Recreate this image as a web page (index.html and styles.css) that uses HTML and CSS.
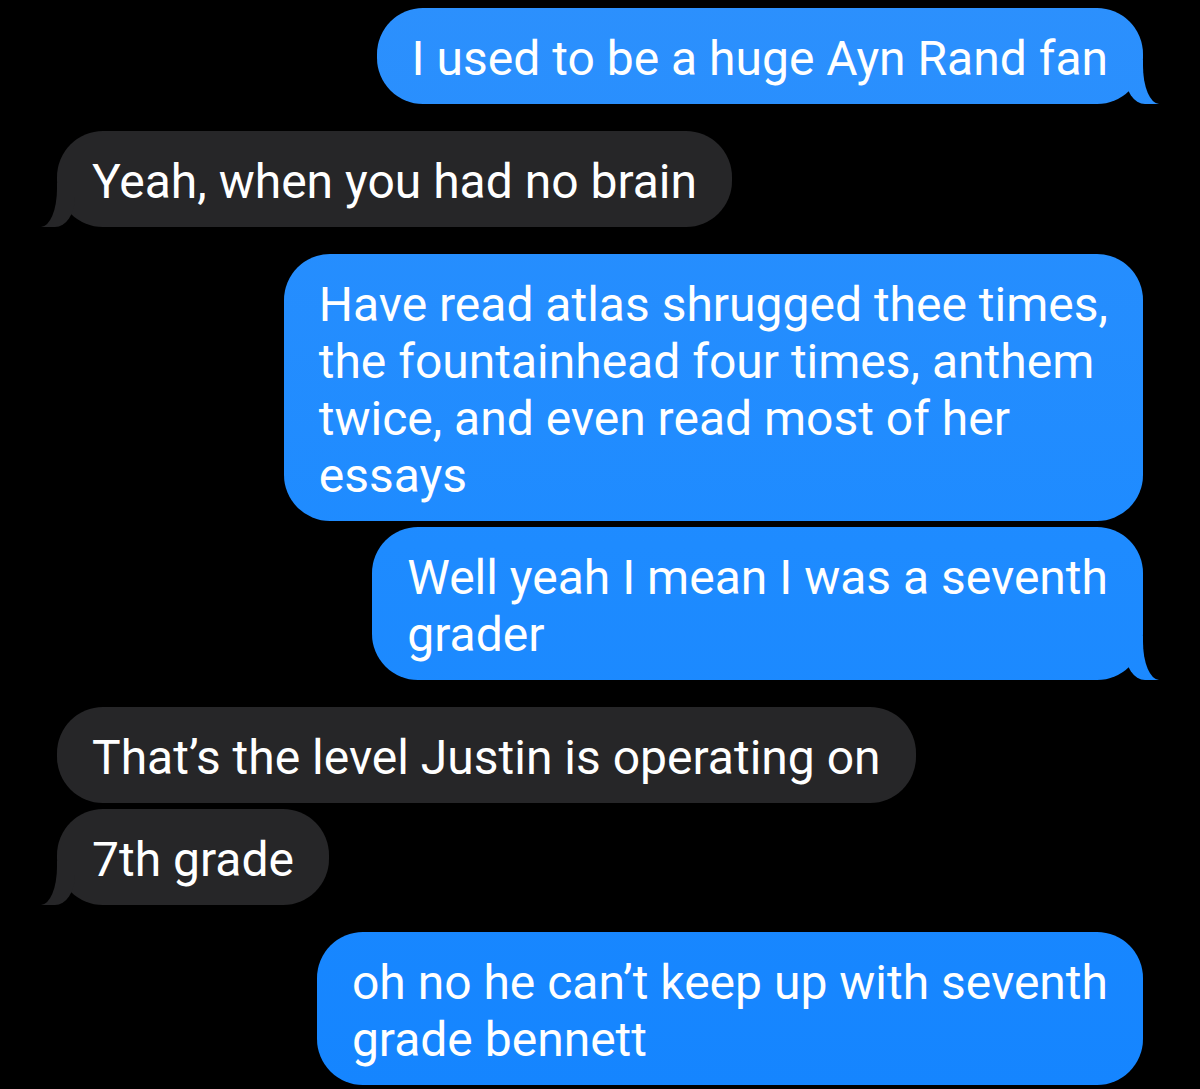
FILE: index.html
```html
<!DOCTYPE html>
<html lang="en">
<head>
<meta charset="utf-8">
<title>Messages</title>
<link rel="stylesheet" href="styles.css">
</head>
<body>
<main class="thread">
  <div class="msg sent tail">I used to be a huge Ayn Rand fan</div>
  <div class="msg received tail new">Yeah, when you had no brain</div>
  <div class="msg sent new">Have read atlas shrugged thee times,<br>the fountainhead four times, anthem<br>twice, and even read most of her<br>essays</div>
  <div class="msg sent tail">Well yeah I mean I was a seventh<br>grader</div>
  <div class="msg received new">That’s the level Justin is operating on</div>
  <div class="msg received tail">7th grade</div>
  <div class="msg sent new">oh no he can’t keep up with seventh<br>grade bennett</div>
</main>
</body>
</html>
```

FILE: styles.css
```css
:root {
  --blue: linear-gradient(180deg, #2c90fd 0%, #1e8bff 50%, #1585ff 100%);
  --gray: #262628;
}

html, body {
  margin: 0;
  padding: 0;
  background: #000;
}

body {
  width: 1200px;
  height: 1089px;
  overflow: hidden;
  font-family: Roboto, "Noto Sans", "Liberation Sans", sans-serif;
}

.thread {
  display: flex;
  flex-direction: column;
  padding: 8px 57px 0;
}

.msg {
  position: relative;
  box-sizing: border-box;
  padding: 22px 35px 17px;
  border-radius: 46px;
  font-size: 48px;
  line-height: 57px;
  color: #fff;
  white-space: nowrap;
  margin-top: 6px;
}

.msg:first-child {
  margin-top: 0;
}

.msg.new {
  margin-top: 27px;
}

.sent {
  align-self: flex-end;
  background: var(--blue);
  background-attachment: fixed;
}

.received {
  align-self: flex-start;
  background: var(--gray);
}

.tail::before,
.tail::after {
  content: "";
  position: absolute;
  bottom: 0;
}

/* sent tail (bottom right) */
.sent.tail::before {
  right: -17px;
  width: 35px;
  height: 44px;
  background: var(--blue);
  background-attachment: fixed;
  border-bottom-left-radius: 20px 30px;
}

.sent.tail::after {
  right: -24px;
  width: 24px;
  height: 48px;
  background: #000;
  border-bottom-left-radius: 16px 38px;
}

/* received tail (bottom left) */
.received.tail::before {
  left: -17px;
  width: 35px;
  height: 44px;
  background: var(--gray);
  border-bottom-right-radius: 20px 30px;
}

.received.tail::after {
  left: -24px;
  width: 24px;
  height: 48px;
  background: #000;
  border-bottom-right-radius: 16px 38px;
}
```
